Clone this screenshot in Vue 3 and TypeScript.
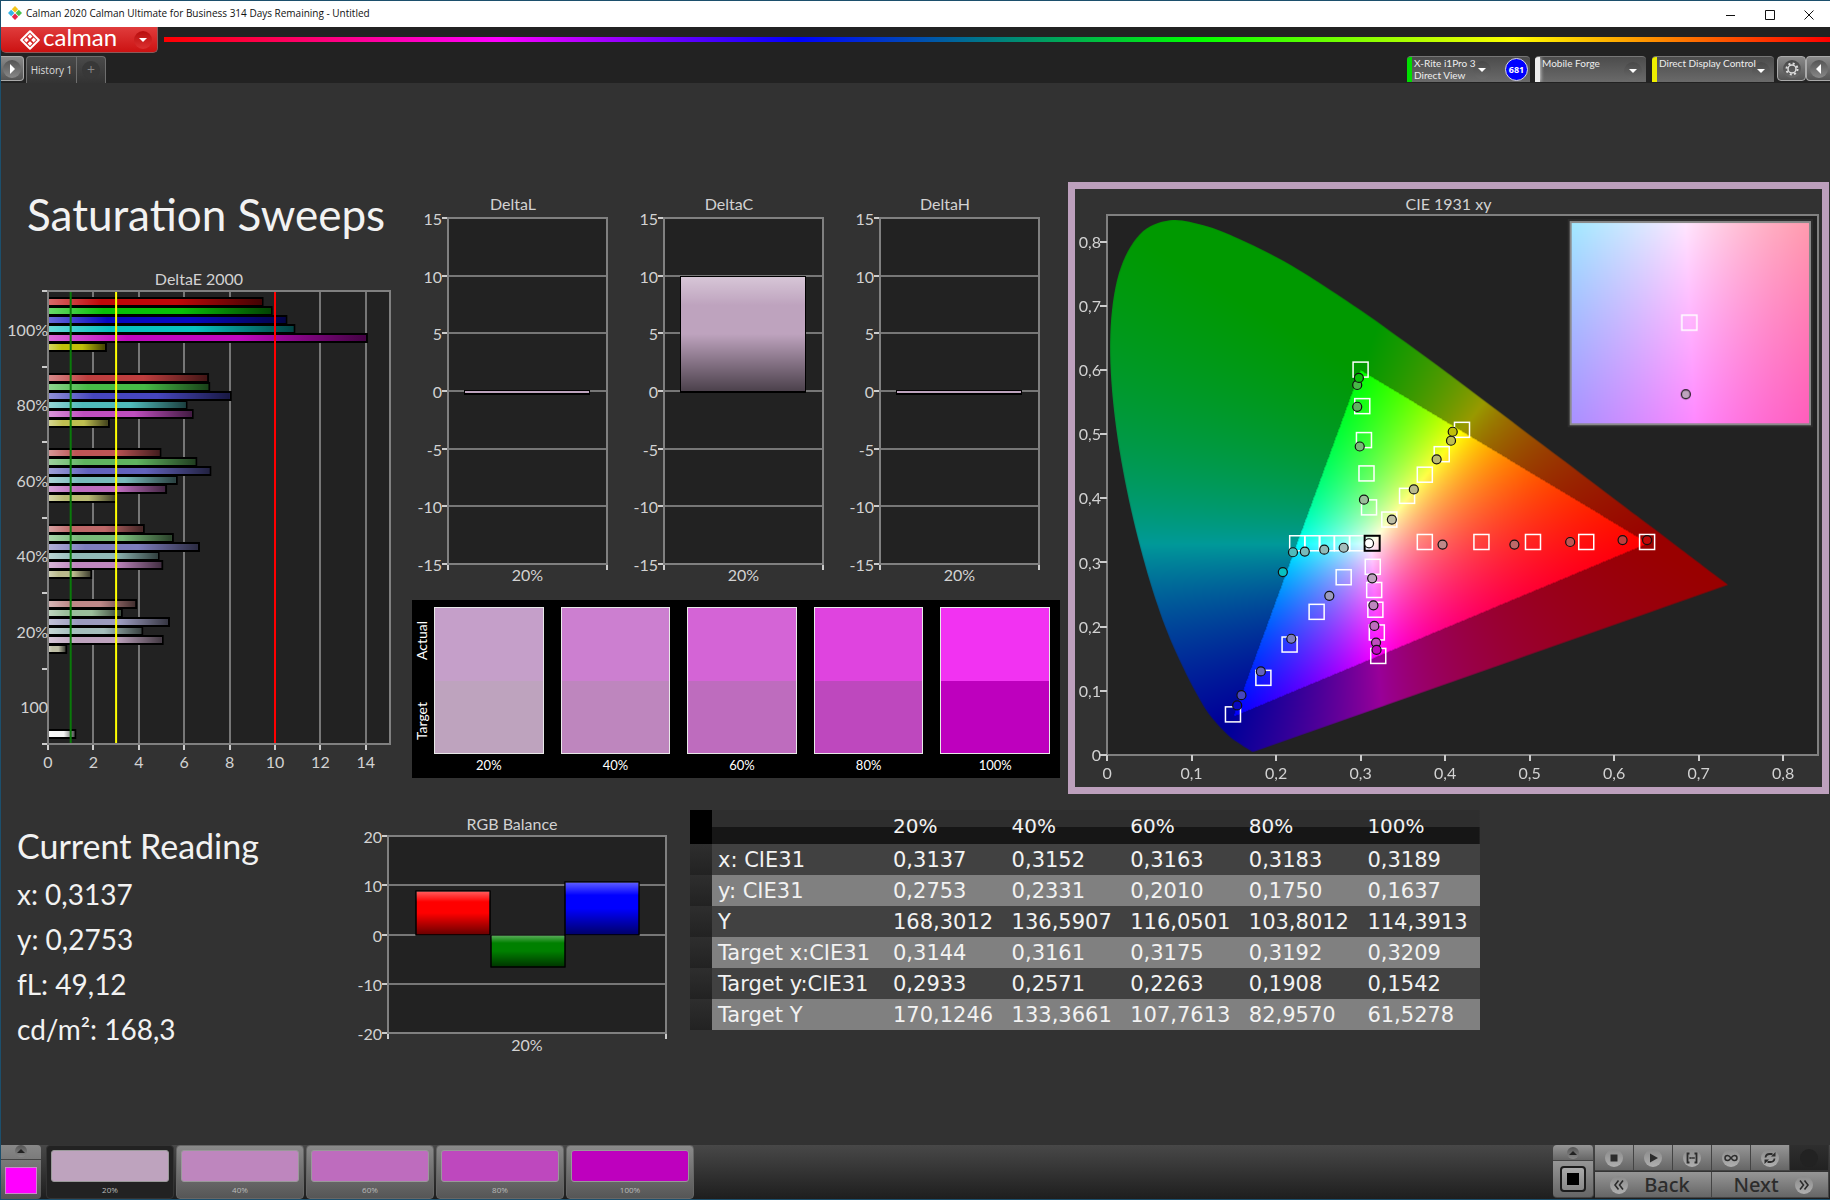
<script setup lang="ts">
import { onMounted, ref } from 'vue'

interface Bar { x: number; y: number; w: number; h: number; color: string }
interface Tick { pos: number; label: string }
interface ColumnChart {
  title: string; width: number; height: number; titleX: number
  left: number; right: number; top: number; bottom: number
  ticks: Tick[]; bars: Bar[]
}
type Point = [number, number]

/* ---- DeltaE 2000 horizontal bars ---- */
const E_LEFT = 47
const E_TOP = 21
const E_GROUP = 75.5
const E_UNIT = 22.7
const eBottom = E_TOP + E_GROUP * 6
const eRight = 389
const hues: Record<string, string[]> = {
  '100%': ['#c00808', '#08c008', '#0808c0', '#08c0c0', '#c008c0', '#c0c008'],
  '80%': ['#be3e3e', '#46ba46', '#4646be', '#50baba', '#be4ebe', '#bebe50'],
  '60%': ['#be5555', '#5fb45f', '#6262bc', '#78baba', '#be6cbe', '#baba73'],
  '40%': ['#be6868', '#78ba78', '#7d7dbe', '#91bab8', '#be86be', '#baba8c'],
  '20%': ['#be8888', '#9bbe9b', '#9b9bbe', '#a5bebc', '#bea3be', '#bebea5'],
}
const sweeps: { label: string; values: number[]; colors: string[]; first: number }[] = [
  { label: '100%', values: [9.45, 9.85, 10.5, 10.85, 14.05, 2.55], colors: hues['100%'], first: 0 },
  { label: '80%', values: [7.05, 7.1, 8.05, 6.1, 6.37, 2.68], colors: hues['80%'], first: 0 },
  { label: '60%', values: [4.95, 6.53, 7.15, 5.67, 5.2, 3.0], colors: hues['60%'], first: 0 },
  { label: '40%', values: [4.22, 5.5, 6.65, 4.87, 5.03, 1.9], colors: hues['40%'], first: 0 },
  { label: '20%', values: [3.88, 3.25, 5.33, 4.15, 5.05, 0.8], colors: hues['20%'], first: 0 },
  { label: '100', values: [1.2], colors: ['#f4f4f4'], first: 6 },
]
const eBars: Bar[] = sweeps.flatMap((s, g) =>
  s.values.map((v, i) => ({
    x: E_LEFT,
    y: Math.round(E_TOP + g * E_GROUP + 7 + (s.first + i) * 9),
    w: v * E_UNIT,
    h: 8,
    color: s.colors[i],
  })),
)
const eTicks = [0, 2, 4, 6, 8, 10, 12, 14]
const eLimits = [
  { at: 1, color: '#0a7a0a' },
  { at: 3, color: '#ffff00' },
  { at: 10, color: '#ff0000' },
]

/* ---- column charts ---- */
function makeTicks(top: number, bottom: number, values: number[]): Tick[] {
  const step = (bottom - top) / (values.length - 1)
  return values.map((v, i) => ({ pos: Math.round(top + i * step), label: String(v) }))
}
function deltaChart(title: string, value: number): ColumnChart {
  const top = 36
  const bottom = 382
  const zero = (top + bottom) / 2
  const unit = (bottom - top) / 30
  return {
    title, width: 216, height: 416, titleX: 108, left: 43, right: 202, top, bottom,
    ticks: makeTicks(top, bottom, [15, 10, 5, 0, -5, -10, -15]),
    bars: [{
      x: 59, w: 126, color: '#bea3be',
      y: value > 0 ? Math.round(zero - value * unit) + 1 : zero,
      h: Math.round(Math.abs(value) * unit),
    }],
  }
}
const deltaCharts = [deltaChart('DeltaL', -0.25), deltaChart('DeltaC', 10), deltaChart('DeltaH', -0.25)]
const rgbChart: ColumnChart = {
  title: 'RGB Balance', width: 346, height: 250, titleX: 168, left: 44, right: 322, top: 26, bottom: 223,
  ticks: makeTicks(26, 223, [20, 10, 0, -10, -20]),
  bars: [
    { x: 72, y: 81, w: 74, h: 44, color: '#ff0000' },
    { x: 147, y: 125, w: 74, h: 32, color: '#008000' },
    { x: 221, y: 72, w: 74, h: 53, color: '#0000ff' },
  ],
}

/* ---- swatches ---- */
const swatches = [
  { label: '20%', actual: '#c59fc9', target: '#bea3be' },
  { label: '40%', actual: '#cc7fd0', target: '#be86be' },
  { label: '60%', actual: '#d464d6', target: '#be6cbe' },
  { label: '80%', actual: '#df44df', target: '#be48be' },
  { label: '100%', actual: '#f232f2', target: '#be00be' },
]

/* ---- CIE 1931 chromaticity ---- */
const C_LEFT = 32
const C_TOP = 26
const C_W = 710
const C_H = 539
const X_UNIT = 844
const Y_UNIT = 640
const cx = (x: number) => C_LEFT + x * X_UNIT
const cy = (y: number) => C_TOP + C_H - y * Y_UNIT
const decimals = (n: number) => (n === 0 ? '0' : '0,' + n)
const cieTicks = [0, 1, 2, 3, 4, 5, 6, 7, 8]

const targets: Point[] = [
  [0.376, 0.332], [0.443, 0.332], [0.504, 0.332], [0.567, 0.332], [0.639, 0.332],
  [0.31, 0.386], [0.307, 0.439], [0.304, 0.491], [0.302, 0.544], [0.3, 0.601],
  [0.334, 0.367], [0.355, 0.404], [0.376, 0.437], [0.396, 0.469], [0.42, 0.507],
  [0.296, 0.33], [0.278, 0.33], [0.26, 0.33], [0.243, 0.33], [0.225, 0.33],
  [0.28, 0.277], [0.248, 0.223], [0.216, 0.172], [0.185, 0.12], [0.149, 0.063],
  [0.3144, 0.2933], [0.3161, 0.2571], [0.3175, 0.2263], [0.3192, 0.1908], [0.3209, 0.1542],
]
const readings: { hue: number; points: Point[] }[] = [
  { hue: 0, points: [[0.397, 0.328], [0.482, 0.328], [0.548, 0.332], [0.61, 0.335], [0.639, 0.335]] },
  { hue: 1, points: [[0.304, 0.398], [0.299, 0.481], [0.296, 0.543], [0.296, 0.577], [0.298, 0.588]] },
  { hue: 5, points: [[0.337, 0.367], [0.363, 0.414], [0.39, 0.461], [0.407, 0.49], [0.409, 0.504]] },
  { hue: 3, points: [[0.28, 0.323], [0.257, 0.32], [0.234, 0.317], [0.22, 0.316], [0.208, 0.285]] },
  { hue: 2, points: [[0.263, 0.248], [0.218, 0.181], [0.182, 0.13], [0.159, 0.093], [0.154, 0.077]] },
  { hue: 4, points: [[0.3137, 0.2753], [0.3152, 0.2331], [0.3163, 0.201], [0.3183, 0.175], [0.3189, 0.1637]] },
]
const levels = ['20%', '40%', '60%', '80%', '100%']
const dots = readings.flatMap(r => r.points.map((p, i) => ({ p, color: hues[levels[i]][r.hue] })))

const locus: Point[] = [
  [0.1741, 0.005], [0.1714, 0.0051], [0.1644, 0.0109], [0.1566, 0.0177], [0.144, 0.0297], [0.1241, 0.0578],
  [0.1096, 0.0868], [0.0913, 0.1327], [0.0687, 0.2007], [0.0454, 0.295], [0.0235, 0.4127], [0.0082, 0.5384],
  [0.0039, 0.6548], [0.0139, 0.7502], [0.0389, 0.812], [0.0743, 0.8338], [0.1142, 0.8262], [0.1547, 0.8059],
  [0.1929, 0.7816], [0.2296, 0.7543], [0.3016, 0.6923], [0.3731, 0.6245], [0.4441, 0.5547], [0.5125, 0.4866],
  [0.5752, 0.4242], [0.627, 0.3725], [0.6658, 0.334], [0.6915, 0.3083], [0.719, 0.2809], [0.7347, 0.2653],
]
const gamutCanvas = ref<HTMLCanvasElement | null>(null)
const insetCanvas = ref<HTMLCanvasElement | null>(null)

function side(a: Point, b: Point, x: number, y: number): boolean {
  return (b[0] - a[0]) * (y - a[1]) - (b[1] - a[1]) * (x - a[0]) >= 0
}
function colorAt(x: number, y: number): [number, number, number] {
  const yy = Math.max(y, 0.001)
  const X = x / yy
  const Z = (1 - x - yy) / yy
  const r = Math.max(0, 3.2406 * X - 1.5372 - 0.4986 * Z)
  const g = Math.max(0, -0.9689 * X + 1.8758 + 0.0415 * Z)
  const b = Math.max(0, 0.0557 * X - 0.204 + 1.057 * Z)
  const red: Point = [0.64, 0.33]
  const green: Point = [0.3, 0.6]
  const blue: Point = [0.15, 0.06]
  const inside = side(red, green, x, y) && side(green, blue, x, y) && side(blue, red, x, y)
  const k = ((inside ? 1 : 0.6) * 255) / Math.max(r, g, b, 0.001)
  return [r * k, g * k, b * k]
}
function paint(canvas: HTMLCanvasElement, toXY: (px: number, py: number) => Point): CanvasRenderingContext2D | null {
  const ctx = canvas.getContext('2d')
  if (!ctx) return null
  const img = ctx.createImageData(canvas.width, canvas.height)
  for (let py = 0; py < canvas.height; py++) {
    for (let px = 0; px < canvas.width; px++) {
      const [x, y] = toXY(px + 0.5, py + 0.5)
      const [r, g, b] = colorAt(x, y)
      const o = (py * canvas.width + px) * 4
      img.data[o] = r
      img.data[o + 1] = g
      img.data[o + 2] = b
      img.data[o + 3] = 255
    }
  }
  ctx.putImageData(img, 0, 0)
  return ctx
}
onMounted(() => {
  if (gamutCanvas.value) {
    const ctx = paint(gamutCanvas.value, (px, py) => [px / X_UNIT, (C_H - py) / Y_UNIT])
    if (ctx) {
      const pts = locus.map(([x, y]): Point => [x * X_UNIT, C_H - y * Y_UNIT])
      ctx.globalCompositeOperation = 'destination-in'
      ctx.beginPath()
      ctx.moveTo(pts[0][0], pts[0][1])
      for (let i = 0; i < pts.length - 1; i++) {
        const p0 = pts[Math.max(0, i - 1)]
        const p1 = pts[i]
        const p2 = pts[i + 1]
        const p3 = pts[Math.min(pts.length - 1, i + 2)]
        ctx.bezierCurveTo(
          p1[0] + (p2[0] - p0[0]) / 6, p1[1] + (p2[1] - p0[1]) / 6,
          p2[0] - (p3[0] - p1[0]) / 6, p2[1] - (p3[1] - p1[1]) / 6,
          p2[0], p2[1],
        )
      }
      ctx.closePath()
      ctx.fill()
    }
  }
  if (insetCanvas.value) {
    paint(insetCanvas.value, (px, py) => [0.3144 + (px - 119) / 4000, 0.2933 - (py - 100) / 4000])
  }
})

/* ---- readings ---- */
const current = ['x: 0,3137', 'y: 0,2753', 'fL: 49,12', 'cd/m²: 168,3']
const rows = [
  { name: 'x: CIE31', cells: ['0,3137', '0,3152', '0,3163', '0,3183', '0,3189'] },
  { name: 'y: CIE31', cells: ['0,2753', '0,2331', '0,2010', '0,1750', '0,1637'] },
  { name: 'Y', cells: ['168,3012', '136,5907', '116,0501', '103,8012', '114,3913'] },
  { name: 'Target x:CIE31', cells: ['0,3144', '0,3161', '0,3175', '0,3192', '0,3209'] },
  { name: 'Target y:CIE31', cells: ['0,2933', '0,2571', '0,2263', '0,1908', '0,1542'] },
  { name: 'Target Y', cells: ['170,1246', '133,3661', '107,7613', '82,9570', '61,5278'] },
]
const selected = ref(0)
</script>

<template>
  <div class="window">
    <header class="titlebar">
      <svg class="app-icon" viewBox="0 0 14 14" aria-hidden="true">
        <path d="M7 0l3.200 3.200L7 6.400 3.800 3.200z" fill="#f5c518" />
        <path d="M3.200 3.800L6.400 7l-3.200 3.200L0 7z" fill="#35b5e8" />
        <path d="M10.800 3.800L14 7l-3.200 3.200L7.600 7z" fill="#4cc04c" />
        <path d="M7 7.600l3.200 3.200L7 14l-3.200-3.200z" fill="#e6264c" />
      </svg>
      <span class="window-title">Calman 2020 Calman Ultimate for Business 314 Days Remaining - Untitled</span>
      <div class="window-buttons">
        <button type="button" aria-label="Minimize"><svg viewBox="0 0 10 10"><path d="M0 5.500h9" /></svg></button>
        <button type="button" aria-label="Maximize"><svg viewBox="0 0 10 10"><path d="M.5.5h9v9h-9z" /></svg></button>
        <button type="button" aria-label="Close"><svg viewBox="0 0 10 10"><path d="M.5.5l9 9M9.500.5l-9 9" /></svg></button>
      </div>
    </header>

    <div class="brandbar">
      <button type="button" class="brand">
        <svg class="brand-mark" viewBox="0 0 20 20" aria-hidden="true">
          <path d="M10 1.200L18.800 10 10 18.800 1.200 10z" fill="none" stroke="#fff" stroke-width="2" stroke-linejoin="round" />
          <path d="M10 4l2.400 2.400L10 8.800 7.600 6.400zM6.400 7.600L8.800 10l-2.400 2.400L4 10zM13.600 7.600L16 10l-2.400 2.400L11.200 10zM10 11.200l2.400 2.400L10 16l-2.400-2.400z" fill="#fff" />
        </svg>
        <span class="brand-name">calman</span>
        <span class="knob red"><i class="down"></i></span>
      </button>
      <div class="rainbow"></div>
    </div>

    <div class="toolbar">
      <button type="button" class="chip first" aria-label="Expand"><span class="knob light"><i class="right"></i></span></button>
      <div class="tabs">
        <button type="button" class="tab">History 1</button>
        <button type="button" class="tab add" aria-label="Add tab"><span class="knob dim">+</span></button>
      </div>
      <div class="devices">
        <button type="button" class="device meter">
          <span class="stripe green"></span>
          <span class="device-text">X-Rite i1Pro 3<br />Direct View</span>
          <span class="knob"><i class="down"></i></span>
          <span class="count">681</span>
        </button>
        <button type="button" class="device source">
          <span class="stripe white"></span>
          <span class="device-text">Mobile Forge</span>
          <span class="knob low"><i class="down"></i></span>
        </button>
        <button type="button" class="device display">
          <span class="stripe yellow"></span>
          <span class="device-text">Direct Display Control</span>
          <span class="knob low"><i class="down"></i></span>
        </button>
        <button type="button" class="chip gear" aria-label="Settings">
          <span class="knob">
            <svg viewBox="0 0 16 16" class="gear-icon">
              <circle cx="8" cy="8" r="4" fill="none" stroke="#ddd" stroke-width="1.500" />
              <circle cx="8" cy="8" r="5.500" fill="none" stroke="#ddd" stroke-width="2" stroke-dasharray="2 2.320" />
            </svg>
          </span>
        </button>
        <button type="button" class="chip last" aria-label="Collapse"><span class="knob light"><i class="left"></i></span></button>
      </div>
    </div>

    <main class="page">
      <div class="top">
        <section class="sweep">
          <h1>Saturation Sweeps</h1>
          <svg class="chart" viewBox="0 0 404 505" role="img" aria-label="DeltaE 2000">
            <defs>
              <linearGradient id="shade-x" x1="0" y1="0" x2="1" y2="0">
                <stop offset="0" stop-color="#fff" stop-opacity=".4" />
                <stop offset=".25" stop-color="#fff" stop-opacity="0" />
                <stop offset=".6" stop-color="#000" stop-opacity="0" />
                <stop offset="1" stop-color="#000" stop-opacity=".65" />
              </linearGradient>
              <linearGradient id="shade-y" x1="0" y1="0" x2="0" y2="1">
                <stop offset="0" stop-color="#fff" stop-opacity=".38" />
                <stop offset=".25" stop-color="#fff" stop-opacity="0" />
                <stop offset=".5" stop-color="#000" stop-opacity="0" />
                <stop offset="1" stop-color="#000" stop-opacity=".6" />
              </linearGradient>
            </defs>
            <text class="label" x="198" y="15" text-anchor="middle">DeltaE 2000</text>
            <rect class="plot" :x="E_LEFT" :y="E_TOP" :width="eRight - E_LEFT" :height="eBottom - E_TOP" />
            <g class="grid">
              <line v-for="t in eTicks" :key="t" :x1="E_LEFT + t * E_UNIT" :x2="E_LEFT + t * E_UNIT" :y1="E_TOP" :y2="eBottom" />
            </g>
            <g class="ticks">
              <line v-for="t in eTicks" :key="t" :x1="E_LEFT + t * E_UNIT" :x2="E_LEFT + t * E_UNIT" :y1="eBottom" :y2="eBottom + 6" />
              <line v-for="n in 7" :key="'g' + n" :x1="E_LEFT - 6" :x2="E_LEFT" :y1="E_TOP + (n - 1) * E_GROUP" :y2="E_TOP + (n - 1) * E_GROUP" />
            </g>
            <g v-for="(b, i) in eBars" :key="i">
              <rect :x="b.x" :y="b.y - 1" :width="b.w + 1" :height="b.h + 2" fill="#000" />
              <rect :x="b.x" :y="b.y + 1" :width="b.w - 1" :height="b.h - 2" :fill="b.color" />
              <rect :x="b.x" :y="b.y + 1" :width="b.w - 1" :height="b.h - 2" fill="url(#shade-x)" />
            </g>
            <line v-for="l in eLimits" :key="l.at" :x1="E_LEFT + l.at * E_UNIT" :x2="E_LEFT + l.at * E_UNIT" :y1="E_TOP" :y2="eBottom" :stroke="l.color" stroke-width="2" />
            <rect class="frame" :x="E_LEFT" :y="E_TOP" :width="eRight - E_LEFT" :height="eBottom - E_TOP" />
            <text v-for="(s, g) in sweeps" :key="s.label" class="label" x="47" :y="E_TOP + (g + 0.5) * E_GROUP + 7" text-anchor="end">{{ s.label }}</text>
            <text v-for="t in eTicks" :key="'x' + t" class="label" :x="E_LEFT + t * E_UNIT" :y="eBottom + 24" text-anchor="middle">{{ t }}</text>
          </svg>
        </section>

        <section class="middle">
          <div class="deltas">
            <svg v-for="c in deltaCharts" :key="c.title" class="chart" :viewBox="`0 0 ${c.width} ${c.height}`" role="img" :aria-label="c.title">
              <text class="label" :x="c.titleX" y="28" text-anchor="middle">{{ c.title }}</text>
              <rect class="plot" :x="c.left" :y="c.top" :width="c.right - c.left" :height="c.bottom - c.top" />
              <g class="grid">
                <line v-for="t in c.ticks" :key="t.label" :x1="c.left - 6" :x2="c.right" :y1="t.pos" :y2="t.pos" />
              </g>
              <g class="ticks">
                <line v-for="t in c.ticks" :key="t.label" :x1="c.left - 6" :x2="c.left" :y1="t.pos" :y2="t.pos" />
                <line :x1="c.left" :x2="c.left" :y1="c.bottom" :y2="c.bottom + 6" />
                <line :x1="c.right" :x2="c.right" :y1="c.bottom" :y2="c.bottom + 6" />
              </g>
              <rect class="frame" :x="c.left" :y="c.top" :width="c.right - c.left" :height="c.bottom - c.top" />
              <g v-for="(b, i) in c.bars" :key="i">
                <rect :x="b.x" :y="b.y - 1" :width="b.w" :height="b.h + 2" fill="#000" />
                <rect :x="b.x + 1" :y="b.y" :width="b.w - 2" :height="Math.max(b.h - 1, 2)" :fill="b.color" />
                <rect v-if="b.h > 4" :x="b.x + 1" :y="b.y" :width="b.w - 2" :height="b.h - 1" fill="url(#shade-y)" />
              </g>
              <text v-for="t in c.ticks" :key="t.label" class="label" :x="c.left - 6" :y="t.pos + 7" text-anchor="end">{{ t.label }}</text>
              <text class="label" :x="(c.left + c.right) / 2" :y="c.bottom + 17" text-anchor="middle">20%</text>
            </svg>
          </div>
          <div class="swatch-panel">
            <div class="side-labels"><span>Actual</span><span>Target</span></div>
            <div class="swatches">
              <figure v-for="s in swatches" :key="s.label" class="swatch">
                <div class="swatch-box">
                  <div :style="{ background: s.actual }"></div>
                  <div :style="{ background: s.target }"></div>
                </div>
                <figcaption>{{ s.label }}</figcaption>
              </figure>
            </div>
          </div>
        </section>

        <section class="cie">
          <svg class="chart" viewBox="0 0 746 597" role="img" aria-label="CIE 1931 xy">
            <text class="label" x="373" y="21" text-anchor="middle">CIE 1931 xy</text>
            <rect class="plot" :x="C_LEFT" :y="C_TOP" :width="C_W" :height="C_H" />
            <foreignObject :x="C_LEFT" :y="C_TOP" :width="C_W" :height="C_H">
              <canvas ref="gamutCanvas" class="fill" :width="C_W" :height="C_H"></canvas>
            </foreignObject>
            <rect class="frame" :x="C_LEFT" :y="C_TOP" :width="C_W" :height="C_H" />
            <g class="ticks">
              <line v-for="t in cieTicks" :key="'tx' + t" :x1="cx(t / 10)" :x2="cx(t / 10)" :y1="C_TOP + C_H" :y2="C_TOP + C_H + 6" />
              <line v-for="t in cieTicks" :key="'ty' + t" :x1="C_LEFT - 7" :x2="C_LEFT" :y1="cy(t / 10)" :y2="cy(t / 10)" />
            </g>
            <text v-for="t in cieTicks" :key="'x' + t" class="label" :x="cx(t / 10)" :y="C_TOP + C_H + 24" text-anchor="middle">{{ decimals(t) }}</text>
            <text v-for="t in cieTicks" :key="'y' + t" class="label" :x="C_LEFT - 6" :y="cy(t / 10) + 6" text-anchor="end">{{ decimals(t) }}</text>
            <rect v-for="(p, i) in targets" :key="'s' + i" class="target" :x="cx(p[0]) - 7.5" :y="cy(p[1]) - 7.5" width="15" height="15" />
            <rect class="target white-point" :x="cx(0.3137) - 7.5" :y="cy(0.33) - 7.5" width="15" height="15" />
            <circle class="dot" :cx="cx(0.31)" :cy="cy(0.33)" r="4.500" fill="#fff" />
            <circle v-for="(d, i) in dots" :key="'d' + i" class="dot" :cx="cx(d.p[0])" :cy="cy(d.p[1])" r="4.500" :fill="d.color" />
            <rect x="492" y="30" width="245" height="208" fill="#2d2d2d" />
            <rect x="494" y="32" width="241" height="204" fill="#8a8a8a" />
            <foreignObject x="496" y="34" width="237" height="200">
              <canvas ref="insetCanvas" class="fill" width="237" height="200"></canvas>
            </foreignObject>
            <rect class="target" x="606" y="126" width="15" height="15" />
            <circle class="dot" cx="610" cy="205" r="4.500" fill="#bea3be" />
          </svg>
        </section>
      </div>

      <div class="bottom">
        <section class="current">
          <h2>Current Reading</h2>
          <p v-for="line in current" :key="line">{{ line }}</p>
        </section>
        <svg class="chart" :viewBox="`0 0 ${rgbChart.width} ${rgbChart.height}`" role="img" aria-label="RGB Balance">
          <text class="label" :x="rgbChart.titleX" y="20" text-anchor="middle">{{ rgbChart.title }}</text>
          <rect class="plot" :x="rgbChart.left" :y="rgbChart.top" :width="rgbChart.right - rgbChart.left" :height="rgbChart.bottom - rgbChart.top" />
          <g class="grid">
            <line v-for="t in rgbChart.ticks" :key="t.label" :x1="rgbChart.left" :x2="rgbChart.right" :y1="t.pos" :y2="t.pos" />
          </g>
          <g class="ticks">
            <line v-for="t in rgbChart.ticks" :key="t.label" :x1="rgbChart.left - 6" :x2="rgbChart.left" :y1="t.pos" :y2="t.pos" />
            <line :x1="rgbChart.left" :x2="rgbChart.left" :y1="rgbChart.bottom" :y2="rgbChart.bottom + 6" />
            <line :x1="rgbChart.right" :x2="rgbChart.right" :y1="rgbChart.bottom" :y2="rgbChart.bottom + 6" />
          </g>
          <rect class="frame" :x="rgbChart.left" :y="rgbChart.top" :width="rgbChart.right - rgbChart.left" :height="rgbChart.bottom - rgbChart.top" />
          <g v-for="(b, i) in rgbChart.bars" :key="i" stroke="#000" stroke-width="1">
            <rect :x="b.x" :y="b.y" :width="b.w" :height="b.h" :fill="b.color" />
            <rect :x="b.x" :y="b.y" :width="b.w" :height="b.h" fill="url(#shade-y)" />
          </g>
          <text v-for="t in rgbChart.ticks" :key="t.label" class="label" :x="rgbChart.left - 6" :y="t.pos + 7" text-anchor="end">{{ t.label }}</text>
          <text class="label" :x="(rgbChart.left + rgbChart.right) / 2" :y="rgbChart.bottom + 18" text-anchor="middle">20%</text>
        </svg>
        <table class="data">
          <colgroup><col class="c-handle" /><col class="c-name" /><col v-for="l in levels" :key="l" /></colgroup>
          <thead>
            <tr><td class="corner"></td><td></td><th v-for="l in levels" :key="l" scope="col">{{ l }}</th></tr>
          </thead>
          <tbody>
            <tr v-for="r in rows" :key="r.name">
              <td class="handle"></td>
              <th scope="row">{{ r.name }}</th>
              <td v-for="(c, i) in r.cells" :key="i">{{ c }}</td>
            </tr>
          </tbody>
        </table>
      </div>
    </main>

    <footer class="footer">
      <div class="picker">
        <button type="button" class="picker-up" aria-label="Show patterns"><span class="knob small"><i class="up"></i></span></button>
        <button type="button" class="picker-color" aria-label="Pattern colour"><span></span></button>
      </div>
      <div class="levels">
        <button v-for="(s, i) in swatches" :key="s.label" type="button" class="level" :class="{ active: selected === i }" @click="selected = i">
          <span class="level-color" :style="{ background: s.target }"></span>
          <span class="level-name">{{ s.label }}</span>
        </button>
      </div>
      <div class="transport">
        <div class="stack">
          <button type="button" class="key stack-up" aria-label="More"><span class="knob small"><i class="up"></i></span></button>
          <button type="button" class="key stack-main" aria-label="Pattern window"><span class="pattern"><i></i></span></button>
        </div>
        <div class="keys">
          <div class="key-row">
            <button type="button" class="key" aria-label="Stop"><span class="disc"><svg viewBox="0 0 18 18"><path d="M5.500 5.500h7v7h-7z" fill="#2c2c2c" /></svg></span></button>
            <button type="button" class="key" aria-label="Read"><span class="disc"><svg viewBox="0 0 18 18"><path d="M6 4.500l8 4.500-8 4.500z" fill="#2c2c2c" /></svg></span></button>
            <button type="button" class="key" aria-label="Read series"><span class="disc"><svg viewBox="0 0 18 18"><path d="M6.500 4.500h-2v9h2M11.500 4.500h2v9h-2M6.500 9h1.300M8.400 9h1.300M10.300 9h1.300" fill="none" stroke="#2c2c2c" stroke-width="1.800" /></svg></span></button>
            <button type="button" class="key" aria-label="Read continuously"><span class="disc"><svg viewBox="0 0 18 18"><path d="M9 9C7.500 7 6.600 6.500 5.500 6.500a2.500 2.500 0 0 0 0 5C6.600 11.500 7.500 11 9 9s2.400-2.500 3.500-2.500a2.500 2.500 0 0 1 0 5C11.400 11.500 10.500 11 9 9z" fill="none" stroke="#2c2c2c" stroke-width="1.500" /></svg></span></button>
            <button type="button" class="key" aria-label="Refresh"><span class="disc"><svg viewBox="0 0 18 18"><path d="M4.500 8.500c.3-2.500 2-3.500 4-3.500h3M13.500 9.500c-.3 2.500-2 3.500-4 3.500h-3" fill="none" stroke="#2c2c2c" stroke-width="1.800" /><path d="M10 7.500h4.500V3zM8 10.500H3.500V15z" fill="#2c2c2c" /></svg></span></button>
            <button type="button" class="key off" aria-label="Unavailable" disabled><span class="disc dark"></span></button>
          </div>
          <div class="nav-row">
            <button type="button" class="key nav back"><span class="disc"><svg viewBox="0 0 18 18"><path d="M8.500 4.500L5 9l3.500 4.500M13 4.500L9.500 9l3.500 4.500" fill="none" stroke="#2c2c2c" stroke-width="1.600" /></svg></span>Back</button>
            <button type="button" class="key nav next">Next<span class="disc"><svg viewBox="0 0 18 18"><path d="M5 4.500L8.500 9 5 13.500M9.500 4.500L13 9l-3.500 4.500" fill="none" stroke="#2c2c2c" stroke-width="1.600" /></svg></span></button>
          </div>
        </div>
      </div>
    </footer>
  </div>
</template>

<style>
body { background: #333; }
</style>

<style scoped>
* { box-sizing: border-box; }
.window {
  display: flex; flex-direction: column; min-height: 100vh;
  border: solid #1c4f6c; border-width: 1px 0 1px 1px;
  background: #323232; color: #f2f2f2;
  font-family: Lato, "Open Sans", sans-serif;
}
button { margin: 0; padding: 0; border: 0; background: none; color: inherit; font: inherit; }
h1, h2, p, figure { margin: 0; font-weight: 400; }

.titlebar { display: flex; align-items: center; height: 26px; padding: 0 2px 2px 7px; background: #fff; color: #111; }
.app-icon { width: 14px; height: 14px; margin-right: 4px; }
.window-title { font: 10px/24px "Open Sans", sans-serif; }
.window-buttons { display: flex; margin-left: auto; }
.window-buttons button { width: 39px; height: 24px; }
.window-buttons svg { width: 10px; height: 10px; fill: none; stroke: #111; }

.brandbar { display: flex; align-items: flex-start; height: 28px; background: #222; }
.brand {
  display: flex; align-items: center; width: 157px; height: 26px; padding-left: 19px;
  border: solid #8a5a5a; border-width: 0 1px 1px 0; border-radius: 0 0 5px 5px;
  background: linear-gradient(#e03c3c, #cc1212); color: #fff;
}
.brand-mark { width: 20px; height: 20px; }
.brand-name { margin-left: 3px; padding-bottom: 5px; font-size: 24px; line-height: 20px; }
.rainbow {
  flex: 1; height: 5px; margin: 10px 0 0 6px;
  background: linear-gradient(90deg, #f00, #f0f 20%, #00f 38%, #0f0 62%, #ff0 81%, #f00);
}

.knob {
  display: flex; align-items: center; justify-content: center; flex: none;
  width: 18px; height: 18px; border-radius: 50%;
  background: linear-gradient(#484848, #6a6a6a); font-size: 14px; line-height: 16px;
}
.knob.red { margin-left: 17px; background: linear-gradient(#b80d0d, #dc3030); }
.knob.light { background: linear-gradient(#555, #888); }
.knob.dim { background: #383838; color: #888; }
.knob.small { width: 12px; height: 12px; background: linear-gradient(#555, #888); }
.down, .up, .left, .right { width: 0; height: 0; border: 4px solid transparent; }
.down { border-width: 4px 4px 0; border-top-color: #fff; }
.up { border-width: 0 4px 4px; border-bottom-color: #222; }
.right { border-width: 5px 0 5px 5px; border-left-color: #fff; }
.left { border-width: 5px 5px 5px 0; border-right-color: #fff; }

.toolbar { display: flex; align-items: flex-start; height: 28px; padding-top: 1px; background: #222; }
.chip {
  display: flex; align-items: center; justify-content: center; height: 25px;
  border: 1px solid #aaa; border-radius: 4px; background: linear-gradient(#8a8a8a, #555);
}
.chip.first { width: 23px; border-left: 0; border-radius: 0 4px 4px 0; }
.chip.gear { width: 29px; margin-left: 3px; }
.chip.last { width: 24px; border-right: 0; border-radius: 4px 0 0 4px; }
.gear-icon { width: 16px; height: 16px; }
.tabs { display: flex; height: 27px; margin-left: 2px; border: solid #6e6e6e; border-width: 1px 1px 0; border-radius: 4px 4px 0 0; background: linear-gradient(#4a4a4a, #333); }
.tab { width: 49px; color: #ddd; font: 10px/25px "Open Sans", sans-serif; white-space: nowrap; }
.tab.add { display: flex; align-items: center; justify-content: center; width: 29px; border-left: 1px solid #6e6e6e; }
.devices { display: flex; margin-left: auto; }
.device {
  display: flex; align-items: center; height: 26px; overflow: hidden;
  border-radius: 4px 4px 0 0; background: linear-gradient(#4c4c4c, #6a6a6a); color: #eee;
  border-top: 1px solid #777;
}
.device.meter { width: 123px; margin-right: 5px; }
.device.source { width: 111px; margin-right: 6px; }
.device.display { width: 122px; }
.stripe { align-self: stretch; flex: none; width: 5px; margin-right: 2px; }
.stripe.green { background: #0d0; }
.stripe.white { background: #eee; box-shadow: 0 0 4px #fff; }
.stripe.yellow { background: #ee0; }
.device-text { position: relative; z-index: 1; flex: 1; min-width: 0; align-self: stretch; font-size: 10px; line-height: 12px; text-align: left; white-space: nowrap; }
.device .knob { margin-right: 4px; }
.device .knob.low { margin-top: 3px; }
.device.meter .knob { margin-right: 14px; }
.count {
  display: flex; align-items: center; justify-content: center; flex: none;
  width: 23px; height: 23px; margin-right: 2px; border: 1px solid #ddd; border-radius: 50%;
  background: #00f; color: #fff; font: 700 9px/12px "Open Sans", sans-serif;
}

.page { flex: 1; padding: 99px 1px 40px 0; }
.top { display: grid; grid-template-columns: 404fr 663fr 761fr; align-items: start; }
.chart { display: block; width: 100%; height: auto; overflow: visible; }
.label { fill: #d2d2d2; font-size: 16px; }
.plot { fill: #222; }
.frame { fill: none; stroke: #808080; stroke-width: 2; }
.grid line { stroke: #777; stroke-width: 2; }
.ticks line { stroke: #ccc; stroke-width: 2; }
.plot, .frame, .grid line, .ticks line { shape-rendering: crispEdges; }

.sweep h1 { padding: 4px 0 28px 26px; font-size: 44px; line-height: 56px; white-space: nowrap; }
.middle { padding-right: 8px; }
.deltas { display: grid; grid-template-columns: repeat(3, 1fr); margin-right: 7px; }
.swatch-panel { display: flex; height: 178px; margin: 2px 0 0 7px; padding: 7px 10px 0 0; background: #000; color: #fff; }
.side-labels {
  display: flex; flex-direction: column; justify-content: space-between;
  width: 22px; height: 147px; padding: 14px 0; font-size: 14px; line-height: 20px;
}
.side-labels span { writing-mode: vertical-rl; transform: rotate(180deg); width: 20px; }
.swatches { display: grid; flex: 1; grid-template-columns: repeat(5, 1fr); column-gap: 17px; }
.swatch-box { display: grid; grid-template-rows: 1fr 1fr; height: 147px; border: 1px solid #e8e8e8; }
.swatch figcaption { font-size: 13px; line-height: 22px; text-align: center; }
.cie { border: 7px solid #bda0bd; }
.fill { display: block; width: 100%; height: 100%; }
.target { fill: none; stroke: #fff; stroke-width: 1.5; }
.white-point { stroke: #000; stroke-width: 2; }
.dot { stroke: #111; stroke-width: 1.2; }

.bottom { display: grid; grid-template-columns: 343fr 346fr 790fr 349fr; align-items: start; margin-top: 16px; }
.current { padding: 13px 0 0 16px; white-space: nowrap; }
.current h2 { margin-bottom: 3px; font-size: 34px; line-height: 46px; }
.current p { font-size: 28px; line-height: 45px; }
.data { width: 100%; border-collapse: collapse; table-layout: fixed; font: 21px/29px "DejaVu Sans", sans-serif; }
.data th, .data td { height: 31px; padding: 2px 0 0 6px; font-weight: 400; text-align: left; white-space: nowrap; }
.c-handle { width: 22px; }
.c-name { width: 175px; }
.data thead tr { height: 34px; background: linear-gradient(#2e2e2e 50%, #161616 50%); }
.data thead th { padding-top: 0; font-size: 20px; }
.data thead .corner { background: #000; }
.data tbody tr { background: #414141; }
.data tbody tr:nth-child(even) { background: #808080; }
.data .handle { background: linear-gradient(#2e2e2e, #222); }

.footer { display: flex; height: 54px; background: linear-gradient(#484848, #1e1e1e); }
.picker { display: flex; flex-direction: column; width: 40px; border-radius: 0 4px 4px 0; background: linear-gradient(#888, #555); }
.picker-up { display: flex; justify-content: center; height: 15px; border-bottom: 1px solid #444; }
.picker-color { flex: 1; padding: 6px 4px 4px; }
.picker-color span { display: block; height: 27px; border: 1px solid #c8c; background: #f0f; }
.levels { display: flex; gap: 2px; margin-left: 5px; }
.level { display: flex; flex-direction: column; width: 128px; padding: 4px 4px 0; border: 1px solid #666; border-radius: 4px; background: linear-gradient(#8a8a8a, #565656); color: #bbb; }
.level.active { background: #222; border-color: #333; color: #bbb; }
.level-color { height: 32px; border: 1px solid #999; border-radius: 3px; }
.level-name { padding-top: 1px; font: 8px/14px "Open Sans", sans-serif; text-align: center; }
.transport { display: flex; gap: 1px; margin: 0 1px 0 auto; padding-bottom: 1px; }
.stack { display: flex; flex-direction: column; width: 41px; }
.key { display: flex; align-items: center; justify-content: center; border: solid #444; border-width: 0 1px 1px 0; background: linear-gradient(#969696, #666); }
.stack-up { height: 16px; border-radius: 4px 4px 0 0; }
.stack-main { flex: 1; border-radius: 0 0 4px 4px; }
.pattern { display: flex; align-items: center; justify-content: center; width: 26px; height: 26px; border: 2px solid #1c1c1c; border-radius: 4px; background: linear-gradient(#aaa, #888); }
.pattern i { width: 12px; height: 12px; background: #000; }
.keys { display: flex; flex-direction: column; gap: 1px; width: 234px; }
.key-row { display: grid; grid-template-columns: repeat(6, 1fr); height: 26px; }
.nav-row { display: grid; flex: 1; grid-template-columns: 1fr 1fr; }
.disc { display: block; width: 18px; height: 18px; border-radius: 50%; background: linear-gradient(#8a8a8a, #b0b0b0); }
.disc svg { display: block; width: 18px; height: 18px; }
.key.off { background: linear-gradient(#2e2e2e, #222); border-color: #333; }
.disc.dark { background: #222; }
.nav { gap: 16px; color: #2c2c2c; font: 500 20px/24px "Noto Sans", sans-serif; }
.nav.back { padding-right: 6px; }
.nav.next { padding-left: 6px; }
</style>
